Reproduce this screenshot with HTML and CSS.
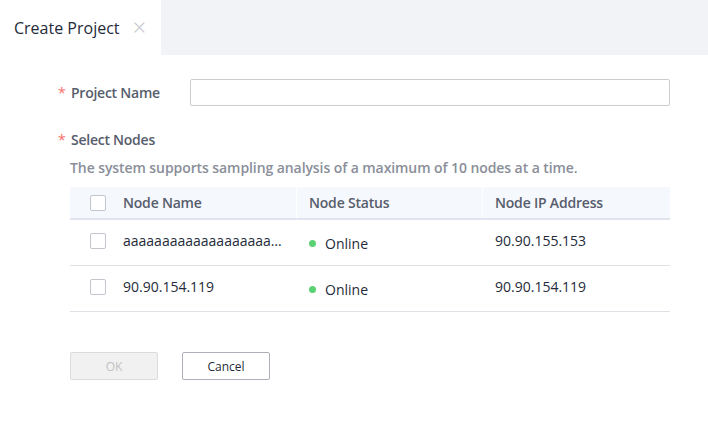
FILE: index.html
```html
<!DOCTYPE html>
<html>
<head>
<meta charset="utf-8">
<link rel="stylesheet" href="styles.css">
</head>
<body>
<div class="tabs">
  <div class="tab active"><span class="tab-title">Create Project</span><span class="tab-close">×</span></div>
  <div class="tab-rest"></div>
</div>
<div class="content">
  <div class="form-row">
    <label class="label"><span class="req">*</span>Project Name</label>
    <input class="input" type="text">
  </div>
  <div class="form-row nodes-row">
    <label class="label"><span class="req">*</span>Select Nodes</label>
  </div>
  <div class="hint">The system supports sampling analysis of a maximum of 10 nodes at a time.</div>
  <div class="table">
    <div class="tr th">
      <div class="cell chk"><span class="box"></span></div>
      <div class="cell name sep">Node Name</div>
      <div class="cell status sep">Node Status</div>
      <div class="cell ip">Node IP Address</div>
    </div>
    <div class="tr">
      <div class="cell chk"><span class="box"></span></div>
      <div class="cell name"><span class="ellipsis">aaaaaaaaaaaaaaaaaaaaaaaaaaaa</span></div>
      <div class="cell status low"><span class="dot"></span>Online</div>
      <div class="cell ip">90.90.155.153</div>
    </div>
    <div class="tr">
      <div class="cell chk"><span class="box"></span></div>
      <div class="cell name">90.90.154.119</div>
      <div class="cell status low"><span class="dot"></span>Online</div>
      <div class="cell ip">90.90.154.119</div>
    </div>
  </div>
  <div class="actions">
    <button class="btn disabled">OK</button>
    <button class="btn">Cancel</button>
  </div>
</div>
</body>
</html>
```
FILE: styles.css
```css
* { box-sizing: border-box; }
html, body { margin: 0; padding: 0; background: #fff; }
body { font-family: "Open Sans", "Noto Sans", sans-serif; color: #252b3a; width: 708px; height: 436px; overflow: hidden; }

.tabs { display: flex; height: 55px; }
.tab { width: 161px; display: flex; align-items: center; padding-left: 14px; background: #fff; }
.tab-title { font-size: 16px; color: #252b3a; }
.tab-close { margin-left: 13px; font-size: 24px; color: #c4c6cc; font-weight: 300; line-height: 1; position: relative; top: -1px; }
.tab-rest { flex: 1; background: #f2f3f7; }

.content { padding: 24px 38px 0 58px; }
.form-row { display: flex; align-items: center; height: 27px; }
.label { width: 132px; font-size: 14px; color: #575d6c; font-weight: 600; letter-spacing: -0.25px; display: flex; align-items: center; }
.req { color: #f66f6a; font-weight: 400; width: 13px; font-size: 14px; }
.input { width: 480px; height: 27px; border: 1px solid #cccccc; border-radius: 2px; padding: 0 8px; outline: none; }
.nodes-row { margin-top: 20px; }
.hint { margin: 6px 0 0 12px; font-size: 14px; color: #8a8e99; font-weight: 600; line-height: 18px; letter-spacing: -0.08px; }

.table { margin: 10px 0 0 12px; width: 600px; font-size: 14px; }
.tr { display: flex; height: 46px; border-bottom: 1px solid #dfe1e6; align-items: stretch; }
.th { height: 33px; background: #f5f8fd; border-bottom: 2px solid #dfe4ee; color: #575d6c; font-weight: 600; letter-spacing: -0.2px; }
.cell { display: flex; align-items: center; padding-left: 12px; }
.chk { width: 41px; padding-left: 20px; }
.name { width: 186px; }
.status { width: 186px; }
.ip { flex: 1; }
.th .sep { border-right: 1px solid #fff; }
.tr:not(.th) .cell { padding-bottom: 4px; }
.tr:not(.th) .low { padding-top: 1px; padding-bottom: 0; }
.box { width: 16px; height: 16px; border: 1px solid #c2c5cc; border-radius: 2px; background: #fff; }
.ellipsis { display: block; width: 164px; overflow: hidden; white-space: nowrap; text-overflow: ellipsis; }
.dot { width: 7px; height: 7px; border-radius: 50%; background: #5cd174; margin-right: 9px; }

.actions { display: flex; gap: 24px; margin: 40px 0 0 12px; }
.btn { width: 88px; height: 28px; border: 1px solid #adb0b8; border-radius: 2px; background: #fff; font-family: "Open Sans", "Noto Sans", sans-serif; font-size: 12px; color: #252b3a; padding: 0; }
.btn.disabled { background: #f1f1f1; border-color: #dcdcdc; color: #c2c2c2; }
```
